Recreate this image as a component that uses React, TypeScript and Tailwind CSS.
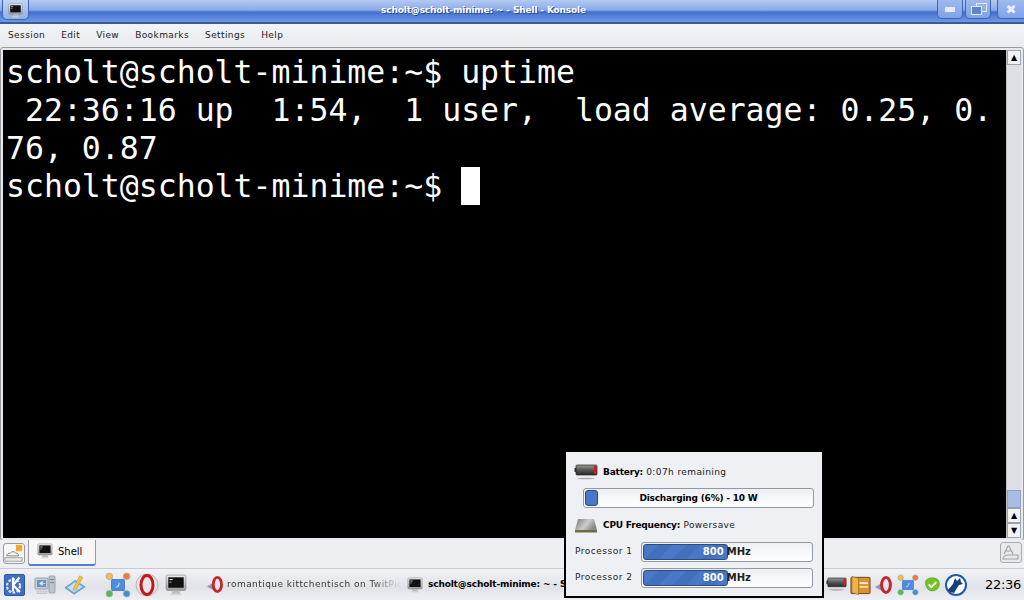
import React from "react";

const sans = { fontFamily: '"DejaVu Sans", sans-serif' };

function MonitorIcon({ size = 20 }: { size?: number }) {
  return (
    <svg width={size} height={size} viewBox="0 0 20 20" className="shrink-0">
      <defs>
        <linearGradient id="mon" x1="0" y1="0" x2="0" y2="1">
          <stop offset="0" stopColor="#eeeeee" />
          <stop offset="1" stopColor="#9a9a9a" />
        </linearGradient>
      </defs>
      <rect x="1" y="1" width="18" height="14" rx="1.5" fill="url(#mon)" stroke="#777" strokeWidth="0.5" />
      <rect x="3" y="3" width="14" height="9.5" fill="#111" />
      <rect x="4" y="4.5" width="3" height="1" fill="#ddd" />
      <rect x="4" y="7" width="2" height="1" fill="#999" />
      <path d="M7 15h6l1 3H6z" fill="#bbb" />
      <rect x="5" y="18" width="10" height="1.2" fill="#d5d5d5" />
    </svg>
  );
}

function KdeIcon() {
  return (
    <svg width="21" height="22" viewBox="0 0 21 22" className="shrink-0">
      <rect x="0.5" y="0.5" width="20" height="21" rx="1.5" fill="#3f6fc4" stroke="#2b55a5" />
      <circle cx="9.5" cy="12" r="6.5" fill="none" stroke="#dfe9f9" strokeWidth="2.2" strokeDasharray="2.6 1.5" />
      <path d="M9 3.5v14M9 11l6.5-7.5M9 11l7 7" stroke="#fff" strokeWidth="2.2" fill="none" />
    </svg>
  );
}

function ComputerIcon() {
  return (
    <svg width="22" height="20" viewBox="0 0 22 20" className="shrink-0">
      <rect x="1" y="3" width="13" height="11" rx="1" fill="#c5ccd6" stroke="#9aa2af" />
      <rect x="3" y="5" width="9" height="7" fill="#6d92ca" />
      <path d="M5.5 8.5l3-2v4zM8.5 8.5h3" fill="#e6eefa" stroke="#e6eefa" strokeWidth="0.6" />
      <rect x="15" y="1" width="6" height="17" rx="1" fill="#bcc3cd" stroke="#9aa2af" />
      <rect x="16" y="4" width="4" height="1" fill="#7c8491" />
      <rect x="16" y="7" width="4" height="1" fill="#7c8491" />
      <rect x="3" y="16" width="10" height="2.5" fill="#d6dae1" stroke="#a9afb9" strokeWidth="0.5" />
    </svg>
  );
}

function NotepadIcon() {
  return (
    <svg width="22" height="22" viewBox="0 0 24 24" className="shrink-0">
      <path d="M1 15L12 7l11 7-12 8z" fill="#6fb4ea" stroke="#3a84c9" strokeWidth="0.7" />
      <path d="M4 15l8-6 8 5-9 6z" fill="#c8e4f9" />
      <path d="M10 16L17 2l3.5 1.6-7 13.4-3.5 1z" fill="#f2c04a" stroke="#c6902a" strokeWidth="0.6" />
    </svg>
  );
}

function NetworkIcon({ size = 24 }: { size?: number }) {
  return (
    <svg width={size} height={size} viewBox="0 0 24 24" className="shrink-0">
      <path d="M4 4L20 20M20 4L4 20" stroke="#8aa0c8" strokeWidth="1" />
      <rect x="6" y="7" width="12" height="10" rx="1" fill="#4c8de0" stroke="#2a62b4" strokeWidth="0.6" />
      <path d="M10 14c2 0 3-2 3-4" stroke="#cfe3fb" fill="none" />
      <circle cx="4" cy="4" r="3" fill="#f2c04a" stroke="#a8a8a8" strokeWidth="0.7" />
      <circle cx="20" cy="4" r="3" fill="#ee7b3a" stroke="#a8a8a8" strokeWidth="0.7" />
      <circle cx="4" cy="20" r="3" fill="#4cc04c" stroke="#a8a8a8" strokeWidth="0.7" />
      <circle cx="20" cy="20" r="3" fill="#3f8fe0" stroke="#a8a8a8" strokeWidth="0.7" />
    </svg>
  );
}

function OperaIcon() {
  return (
    <svg width="24" height="24" viewBox="0 0 24 24" className="shrink-0">
      <circle cx="12" cy="12" r="11" fill="#e6e6e6" stroke="#b5b5b5" />
      <ellipse cx="12" cy="12" rx="6" ry="9.5" fill="none" stroke="#c4161c" strokeWidth="3" />
    </svg>
  );
}

function OperaSmall({ size = 18 }: { size?: number }) {
  return (
    <svg width={size} height={size} viewBox="0 0 18 18" className="shrink-0">
      <path d="M0 11l7-4v8z" fill="#8f97b8" />
      <ellipse cx="11" cy="9" rx="4.4" ry="7.5" fill="none" stroke="#c4262c" strokeWidth="3" />
    </svg>
  );
}

function BatteryIcon({ w = 24, h = 18 }: { w?: number; h?: number }) {
  return (
    <svg width={w} height={h} viewBox="0 0 24 18" className="shrink-0">
      <defs>
        <linearGradient id="bat" x1="0" y1="0" x2="0" y2="1">
          <stop offset="0" stopColor="#9a9a9a" />
          <stop offset="0.5" stopColor="#555" />
          <stop offset="1" stopColor="#2a2a2a" />
        </linearGradient>
      </defs>
      <rect x="0.5" y="4" width="2" height="4" fill="#333" />
      <rect x="2" y="1" width="21" height="10" rx="1" fill="url(#bat)" stroke="#222" strokeWidth="0.7" />
      <rect x="20" y="2" width="2.4" height="8" fill="#e01818" />
      <ellipse cx="12" cy="14.5" rx="9" ry="0.8" fill="#aaa" />
    </svg>
  );
}

function DriveIcon() {
  return (
    <svg width="24" height="16" viewBox="0 0 24 16" className="shrink-0">
      <defs>
        <linearGradient id="drv" x1="0" y1="0" x2="1" y2="0.4">
          <stop offset="0" stopColor="#777" />
          <stop offset="0.6" stopColor="#ccc" />
          <stop offset="1" stopColor="#888" />
        </linearGradient>
      </defs>
      <path d="M4 1h16l3 11H1z" fill="url(#drv)" />
      <rect x="1" y="12" width="22" height="2.5" fill="#6d6d45" />
    </svg>
  );
}

function FolderDoorIcon() {
  return (
    <svg width="21" height="22" viewBox="0 0 22 22" className="shrink-0">
      <rect x="1" y="3" width="20" height="17" rx="1" fill="#d9922e" stroke="#6b4310" />
      <path d="M2 2l7 2v17l-7-2z" fill="#f0b04c" stroke="#8a5a1c" strokeWidth="0.6" />
      <rect x="10" y="8" width="9" height="2" fill="#fff1d8" />
      <rect x="10" y="12" width="9" height="2" fill="#f9d9a4" />
    </svg>
  );
}

function LeafIcon() {
  return (
    <svg width="17" height="17" viewBox="0 0 22 20" className="shrink-0">
      <path d="M2 6C3 1 12 0 17 3c4 3 4 9 0 13-4 3-9 3-12 0C3 13 1 10 2 6z" fill="#76c02a" stroke="#4c8c16" strokeWidth="0.6" />
      <path d="M6 10l3.5 3.5L16 7" stroke="#fff" strokeWidth="2.4" fill="none" />
    </svg>
  );
}

function WolfIcon() {
  return (
    <svg width="22" height="22" viewBox="0 0 22 22" className="shrink-0">
      <circle cx="11" cy="11" r="10" fill="#fff" stroke="#1f5aa8" strokeWidth="2" />
      <path d="M3 16l5-6 2-6 2 3 3-3 1 4 2 2-4 1-2 3-3 5-4-1z" fill="#123f80" />
    </svg>
  );
}

function WeatherIcon() {
  return (
    <svg width="20" height="20" viewBox="0 0 22 22">
      <rect x="13" y="1" width="7" height="7" fill="#f6a623" />
      <path d="M3 13c0-2 2-3 4-3 1-2 5-2 6 0 2 0 3 1 3 3z" fill="#fff" stroke="#555" strokeWidth="0.8" />
      <path d="M1 15h19v4H1z" fill="#e9e9e9" stroke="#777" strokeWidth="0.7" />
    </svg>
  );
}

function ClearIcon() {
  return (
    <svg width="20" height="18" viewBox="0 0 20 18">
      <path d="M3 10L7 2h1l4 8M5 7h5" stroke="#a3a3a3" strokeWidth="1.2" fill="none" />
      <path d="M2 15c0-3 3-4 6-4h9v4z" fill="none" stroke="#a3a3a3" strokeWidth="1.1" />
    </svg>
  );
}

function BarBox({ children, className }: { children: React.ReactNode; className: string }) {
  return (
    <div className={`relative h-[20px] rounded-[3px] border border-[#9299a6] bg-gradient-to-b from-[#eef0f4] to-[#ffffff] ${className}`}>
      {children}
    </div>
  );
}

function ProcessorRow({ label }: { label: string }) {
  return (
    <div className="flex items-center h-[20px] mb-[6px]">
      <span className="w-[66px] text-[9px] tracking-[0.5px] text-[#222] ml-[1px]">{label}</span>
      <BarBox className="w-[173px]">
        <div className="absolute left-[1px] top-[1px] bottom-[1px] w-[85px] rounded-[3px] border border-[#2d4a80] bg-[repeating-linear-gradient(135deg,#4a78c8_0px,#4a78c8_10px,#4270bd_10px,#4270bd_20px)]" />
        <div className="absolute left-0 top-0 h-[18px] w-[82px] text-right text-[10px] leading-[18px] font-bold text-white">800</div>
        <div className="absolute left-[85px] top-0 h-[18px] text-[10px] leading-[18px] font-bold text-[#222]">MHz</div>
      </BarBox>
    </div>
  );
}

export default function App() {
  return (
    <div className="relative w-[1024px] h-[600px] overflow-hidden flex flex-col bg-[#eeeff3]" style={sans}>
      {/* window title */}
      <div className="relative h-[24px] shrink-0 flex items-center border-b-2 border-[#3b5a98] bg-[linear-gradient(#b4c9f3_0px,#8aaae8_10px,#4470cc_12px,#6d98e8_22px)]">
        <div className="absolute left-[2px] top-0 w-[27px] h-[20px] rounded-b-[5px] border border-t-0 border-[#3f66ad] bg-gradient-to-b from-[#c3d4f3] to-[#8fb0e8] flex justify-center pt-[3px]">
          <MonitorIcon size={15} />
        </div>
        <div className="w-full text-center pr-[57px] text-[9px] tracking-[-0.15px] font-bold text-white [text-shadow:1px_1px_0_#2a4a90]">scholt@scholt-minime: ~ - Shell - Konsole</div>
        <div className="absolute right-[33px] top-0 flex gap-[2px]">
          <div className="w-[26px] h-[19px] rounded-b-[5px] border border-t-0 border-[#3f66ad] bg-gradient-to-b from-[#9db9ee] to-[#7fa3e8] flex items-center justify-center">
            <div className="w-[10px] h-[5px] bg-[#e4ebf8]" />
          </div>
          <div className="w-[26px] h-[19px] rounded-b-[5px] border border-t-0 border-[#3f66ad] bg-gradient-to-b from-[#9db9ee] to-[#7fa3e8] relative">
            <div className="absolute left-[10px] top-[3px] w-[11px] h-[9px] border border-[#e4ebf8]" />
            <div className="absolute left-[5px] top-[6px] w-[11px] h-[9px] border border-[#e4ebf8] bg-[#5f86cc]" />
          </div>
        </div>
        <div className="absolute right-0 top-0 w-[27px] h-[19px] rounded-bl-[5px] border border-t-0 border-r-0 border-[#3f66ad] bg-gradient-to-b from-[#9db9ee] to-[#7fa3e8] flex items-center justify-center text-[13px] font-bold text-[#e8eefa] leading-none">
          ✖
        </div>
      </div>

      {/* menu bar */}
      <div className="h-[24px] shrink-0 flex items-center gap-[16px] pl-[8px] text-[9px] tracking-[0.4px] text-[#1a1a1a] bg-gradient-to-b from-[#f3f4f7] to-[#e9eaee]">
        {["Session", "Edit", "View", "Bookmarks", "Settings", "Help"].map((m) => (
          <span key={m}>{m}</span>
        ))}
      </div>

      {/* terminal + scrollbar */}
      <div className="h-[492px] shrink-0 mx-[1px] flex border-2 border-[#e8e9ed] rounded-[2px] outline outline-1 outline-[#9a9a9f]">
        <div
          className="flex-1 bg-black text-white text-[31.5px] leading-[38px] whitespace-pre pl-[3px] pt-[3px]"
          style={{ fontFamily: '"DejaVu Sans Mono", monospace' }}
        >
          <div>scholt@scholt-minime:~$ uptime</div>
          <div> 22:36:16 up  1:54,  1 user,  load average: 0.25, 0.</div>
          <div>76, 0.87</div>
          <div className="flex">
            <span>scholt@scholt-minime:~$ </span>
            <span className="inline-block w-[19px] h-[38px] bg-white" />
          </div>
        </div>
        <div className="w-[15px] shrink-0 flex flex-col bg-[#dfe0e5] border-l border-[#c0c2c8]">
          <div className="h-[15px] flex items-center justify-center border border-[#a0a2a8] bg-[#f2f2f5] text-[8px] leading-none text-black">▲</div>
          <div className="flex-1" />
          <div className="h-[18px] bg-[#a9bde0] border border-[#8ea0c4]" />
          <div className="h-[15px] flex items-center justify-center border border-[#a0a2a8] bg-[#f2f2f5] text-[8px] leading-none text-black">▲</div>
          <div className="h-[15px] flex items-center justify-center border border-[#a0a2a8] bg-[#f2f2f5] text-[8px] leading-none text-black">▼</div>
        </div>
      </div>

      {/* tab bar */}
      <div className="h-[29px] shrink-0 flex items-start justify-between pl-[3px] pr-[2px] border-b border-[#c9cad0] bg-[#eeeff3]">
        <div className="flex items-start">
          <div className="w-[22px] h-[21px] mt-[3px] rounded-[3px] border border-[#9a9a9f] bg-[#f8f8fa] flex items-center justify-center">
            <WeatherIcon />
          </div>
          <div className="w-[68px] h-[26px] ml-[3px] flex items-center pl-[8px] pb-[2px] gap-[5px] rounded-b-[3px] border border-t-0 border-[#9a9aa0] border-b-2 border-b-[#4d7fd0] bg-[#f7f7f9] text-[10px] text-black">
            <MonitorIcon size={16} />
            <span>Shell</span>
          </div>
        </div>
        <div className="w-[22px] h-[21px] mt-[2px] rounded-[3px] border border-[#a9a9ae] bg-[#e8e9ed] flex items-center justify-center">
          <ClearIcon />
        </div>
      </div>

      {/* kde panel */}
      <div className="flex-1 flex items-center pl-[4px] bg-[linear-gradient(#f1f2f5,#e2e3e8_60%,#eeeff3)] text-[9px] text-[#333] tracking-[0.45px]">
        <KdeIcon />
        <div className="w-[9px] shrink-0" />
        <ComputerIcon />
        <div className="w-[8px] shrink-0" />
        <NotepadIcon />
        <div className="w-[19px] shrink-0" />
        <NetworkIcon size={26} />
        <div className="w-[4px] shrink-0" />
        <OperaIcon />
        <div className="w-[6px] shrink-0" />
        <MonitorIcon size={22} />
        <div className="w-[20px] shrink-0" />
        <OperaSmall size={17} />
        <span className="ml-[3px] w-[180px] shrink-0 whitespace-nowrap overflow-hidden bg-gradient-to-r from-[#333] from-[80%] to-transparent to-[97%] bg-clip-text text-transparent">romantique kittchentisch on TwitPic</span>
        <MonitorIcon size={16} />
        <span className="ml-[5px] w-[398px] shrink-0 font-bold tracking-[-0.15px] text-black whitespace-nowrap">scholt@scholt-minime: ~ - S</span>
        <BatteryIcon w={21} h={16} />
        <div className="w-[3px] shrink-0" />
        <FolderDoorIcon />
        <div className="w-[4px] shrink-0" />
        <OperaSmall />
        <div className="w-[4px] shrink-0" />
        <NetworkIcon size={22} />
        <div className="w-[5px] shrink-0" />
        <LeafIcon />
        <div className="w-[4px] shrink-0" />
        <WolfIcon />
        <span className="ml-[18px] text-[13px] tracking-[-0.3px] text-black whitespace-nowrap">22:36</span>
      </div>

      {/* battery popup */}
      <div className="absolute left-[564px] top-[450px] w-[260px] h-[148px] border-2 border-black bg-[#eef0f4] pl-[8px] pr-[9px] pt-[12px] text-[9px] text-[#222]">
        <div className="flex items-center h-[17px] gap-[5px] tracking-[0.4px]">
          <BatteryIcon />
          <span><b className="text-black tracking-[-0.2px]">Battery:</b> 0:07h remaining</span>
        </div>
        <BarBox className="ml-[9px] mt-[7px] w-[231px]">
          <div className="absolute left-[1px] top-[1px] bottom-[1px] w-[13px] rounded-[3px] border border-[#2d4a80] bg-[#4a78c8]" />
          <div className="text-center text-[9px] tracking-[-0.2px] leading-[18px] font-bold text-black">Discharging (6%) - 10 W</div>
        </BarBox>
        <div className="flex items-center h-[16px] mt-[10px] gap-[5px] tracking-[0.4px]">
          <DriveIcon />
          <span><b className="text-black tracking-[-0.2px]">CPU Frequency:</b> Powersave</span>
        </div>
        <div className="mt-[8px]">
          <ProcessorRow label="Processor 1" />
          <ProcessorRow label="Processor 2" />
        </div>
      </div>
    </div>
  );
}
